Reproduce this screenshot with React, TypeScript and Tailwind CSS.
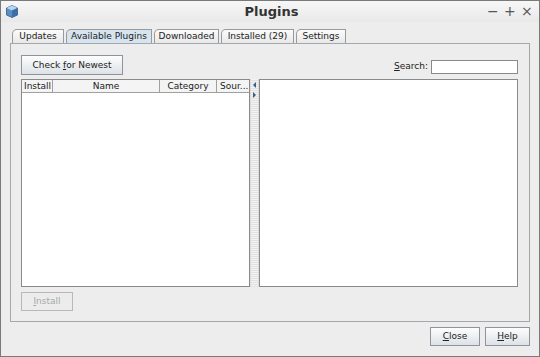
import React from "react";

const font = { fontFamily: '"DejaVu Sans", Verdana, sans-serif' };

function Tab({ label, active, w }: { label: string; active?: boolean; w: string }) {
  return (
    <div
      className={
        "h-[14px] flex items-center justify-center text-[9px] leading-none text-[#222] border border-b-0 border-[#9a9a9a] rounded-tl-[5px] " +
        w +
        (active ? " bg-[#d6e4f0]" : " bg-gradient-to-b from-[#fbfbfb] to-[#e8e8e8]")
      }
    >
      {label}
    </div>
  );
}

function Btn({ children, className, disabled }: { children: React.ReactNode; className?: string; disabled?: boolean }) {
  return (
    <div
      className={
        "flex items-center justify-center text-[9px] leading-none border " +
        (disabled
          ? "border-[#b8b8b8] text-[#a8a8a8] bg-[#ececec] "
          : "border-[#8e949a] text-[#222] bg-gradient-to-b from-[#fdfdfd] to-[#dde2e7] ") +
        (className || "")
      }
    >
      <span>{children}</span>
    </div>
  );
}

export default function App() {
  return (
    <div style={font} className="w-[540px] h-[357px] bg-[#ededed] border border-[#7a7a7a] flex flex-col overflow-hidden">
      {/* title bar */}
      <div className="h-[21px] flex items-center px-[5px] bg-gradient-to-b from-[#f7f7f7] to-[#e9e9e9]">
        <svg width="12" height="13" viewBox="0 0 12 13">
          <path d="M6 0.5 L11.5 3 L11.5 10 L6 12.5 L0.5 10 L0.5 3 Z" fill="#5b8fc4" stroke="#2d5a8c" strokeWidth="0.8" />
          <path d="M6 0.5 L11.5 3 L6 5.5 L0.5 3 Z" fill="#b7d4f0" />
          <path d="M6 5.5 L11.5 3 L11.5 10 L6 12.5 Z" fill="#3b6fa6" />
        </svg>
        <div className="flex-1 text-center text-[13px] font-bold text-[#333] pl-[38px]">Plugins</div>
        <div className="flex items-center gap-[6px] text-[14px] text-[#555] pr-[2px]">
          <span className="w-[11px] text-center">−</span>
          <span className="w-[11px] text-center">+</span>
          <span className="w-[11px] text-center">×</span>
        </div>
      </div>

      {/* tabs */}
      <div className="flex items-end gap-[2px] pl-[11px] mt-[7px]">
        <Tab label="Updates" w="w-[52px]" />
        <Tab label="Available Plugins" active w="w-[86px]" />
        <Tab label="Downloaded" w="w-[65px]" />
        <Tab label="Installed (29)" w="w-[73px]" />
        <Tab label="Settings" w="w-[50px]" />
      </div>

      {/* panel */}
      <div className="mx-[9px] h-[279px] border border-[#a4a8ad] flex flex-col pl-[10px] pr-[11px] pt-[11px]">
        <div className="flex items-center">
          <Btn className="w-[102px] h-[20px]">
            Check <span className="underline">f</span>or Newest
          </Btn>
          <div className="flex-1" />
          <span className="text-[9px] text-[#222] mr-[3px] mt-[4px]">
            <span className="underline">S</span>earch:
          </span>
          <div className="w-[87px] h-[14px] bg-white border border-[#8a8a8a] mt-[4px]" />
        </div>
        <div className="flex mt-[4px] h-[208px]">
          <div className="w-[229px] bg-white border border-[#8a8a8a] flex flex-col">
            <div className="flex h-[13px] text-[9px] text-[#222] leading-none">
              <div className="w-[31px] flex items-center pl-[2px] border-r border-b border-[#a0a0a0] bg-[#f4f4f4]">Install</div>
              <div className="w-[107px] flex items-center justify-center border-r border-b border-[#a0a0a0] bg-[#f4f4f4]">Name</div>
              <div className="w-[57px] flex items-center justify-center border-r border-b border-[#a0a0a0] bg-[#f4f4f4]">Category</div>
              <div className="flex-1 flex items-center pl-[3px] border-b border-[#a0a0a0] bg-[#f4f4f4]">Sour...</div>
            </div>
          </div>
          <div className="w-[9px] flex flex-col items-center bg-[repeating-linear-gradient(0deg,#e2e2e2_0px,#e2e2e2_1px,#f2f2f2_1px,#f2f2f2_2px)] border-x border-[#dcdcdc]">
            <svg width="5" height="20" viewBox="0 0 5 20" className="mt-[2px]">
              <path d="M4 1 L1 4 L4 7 Z" fill="#3a5f8a" />
              <path d="M1 11 L4 14 L1 17 Z" fill="#3a5f8a" />
            </svg>
          </div>
          <div className="flex-1 bg-white border border-[#8a8a8a]" />
        </div>
        <Btn disabled className="w-[52px] h-[19px] mt-[5px]">
          <span className="underline">I</span>nstall
        </Btn>
      </div>

      {/* footer */}
      <div className="flex justify-end gap-[5px] pr-[9px] mt-[5px]">
        <Btn className="w-[50px] h-[19px]">
          <span className="underline">C</span>lose
        </Btn>
        <Btn className="w-[45px] h-[19px]">
          <span className="underline">H</span>elp
        </Btn>
      </div>
    </div>
  );
}
